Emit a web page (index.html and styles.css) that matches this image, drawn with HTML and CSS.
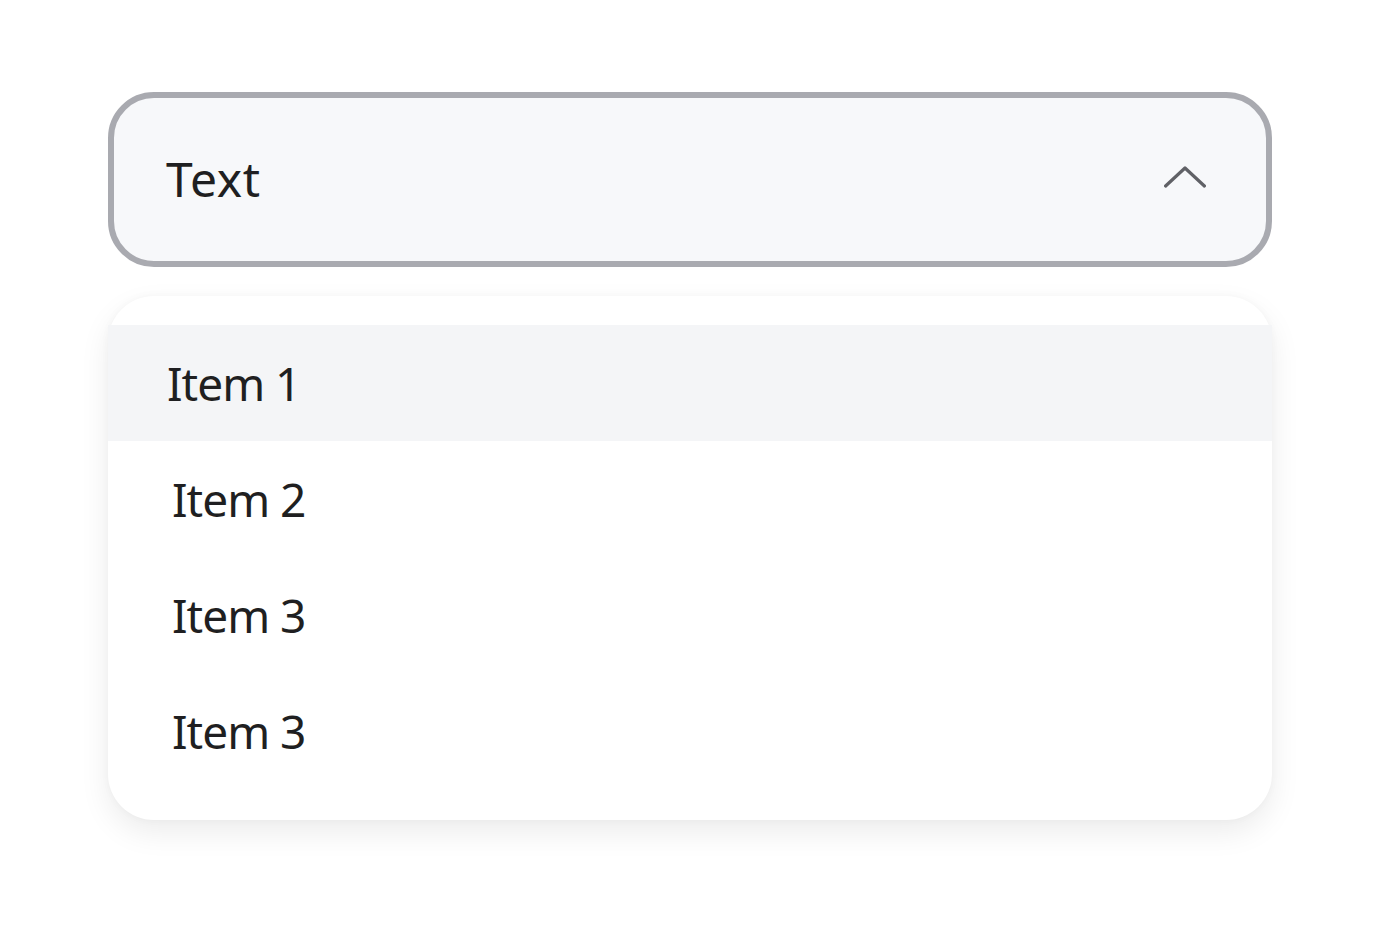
FILE: index.html
```html
<!DOCTYPE html>
<html>
<head>
<meta charset="utf-8">
<link rel="stylesheet" href="styles.css">
</head>
<body>
<div class="wrap">
  <div class="select">
    <span class="select-text">Text</span>
    <svg class="chev" width="42" height="24" viewBox="0 0 42 24"><polyline points="1.6,21 21,3 40.4,21" fill="none" stroke="#606166" stroke-width="3.2" stroke-linecap="round" stroke-linejoin="round"/></svg>
  </div>
  <ul class="menu">
    <li class="item active first">Item 1</li>
    <li class="item">Item 2</li>
    <li class="item">Item 3</li>
    <li class="item">Item 3</li>
  </ul>
</div>
</body>
</html>
```
FILE: styles.css
```css
html, body {
  margin: 0;
  padding: 0;
  background: #ffffff;
}
body {
  font-family: "Noto Sans", "Open Sans", sans-serif;
  color: #1f1f21;
  min-height: 942px;
}
.wrap {
  width: 1164px;
  padding: 92px 0 120px 108px;
  display: flex;
  flex-direction: column;
  gap: 29px;
}
.select {
  box-sizing: border-box;
  height: 175px;
  border: 6px solid #a9aab0;
  border-radius: 46px;
  background: #f7f8fa;
  display: flex;
  align-items: center;
  justify-content: space-between;
  padding: 0 60px 0 52px;
}
.select-text {
  font-size: 48px;
  line-height: 1;
  position: relative;
  top: -1px;
  letter-spacing: 0.6px;
}
.chev {
  display: block;
  margin-top: -6px;
}
.menu {
  list-style: none;
  margin: 0;
  padding: 29px 0 31px;
  background: #ffffff;
  border-radius: 46px;
  box-shadow: 0 12px 30px rgba(0, 0, 0, 0.08), 0 0 8px rgba(0, 0, 0, 0.03);
}
.item {
  height: 116px;
  display: flex;
  align-items: center;
  padding-left: 64px;
  font-size: 46px;
  font-weight: 400;
  line-height: 1;
  letter-spacing: -1px;
}
.item.first {
  padding-left: 59px;
}
.item.active {
  background: #f4f5f7;
}
```
